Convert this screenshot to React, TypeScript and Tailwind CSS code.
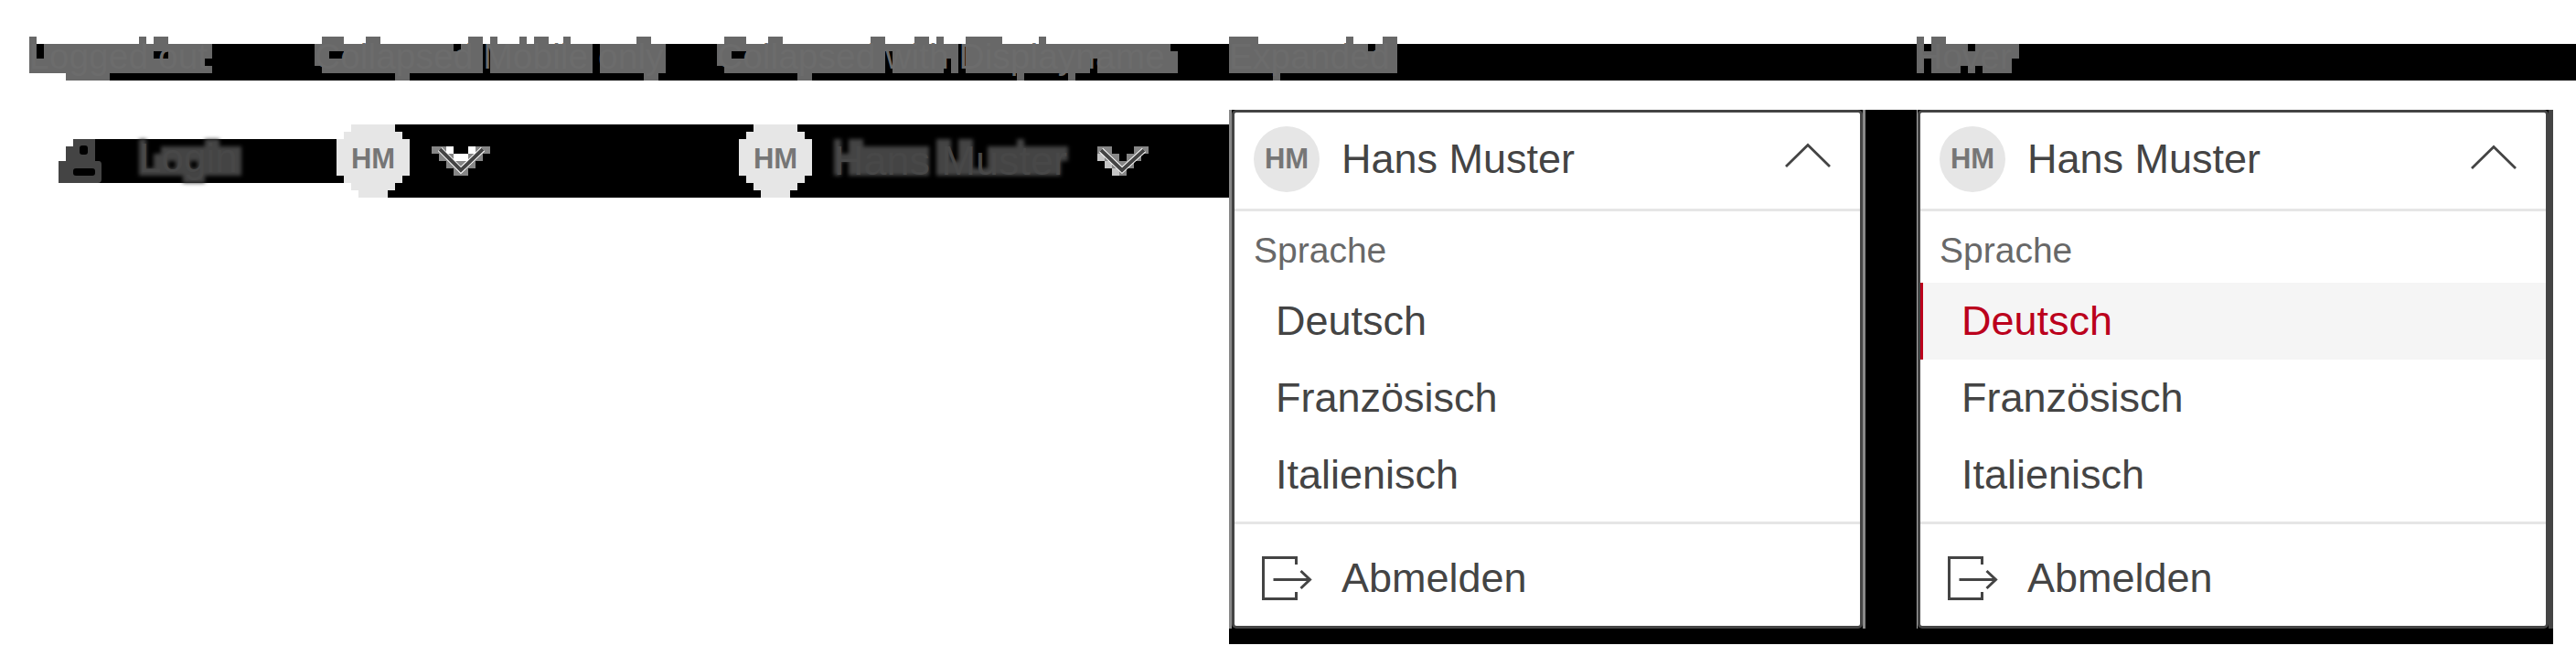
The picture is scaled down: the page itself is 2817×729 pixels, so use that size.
import React from "react";

type Span = [start: number, length: number];

const CELL = 8;

/** Draws rows of filled 8px cells; every row is a list of [start, length] runs. */
function Cells({
  rows,
  columns,
  fill,
  className,
}: {
  rows: Span[][];
  columns: number;
  fill: string;
  className: string;
}) {
  return (
    <svg
      aria-hidden="true"
      className={className}
      width={columns * CELL}
      height={rows.length * CELL}
      shapeRendering="crispEdges"
    >
      {rows.map((row, y) =>
        row.map(([start, length]) => (
          <rect
            key={`${y}-${start}`}
            x={start * CELL}
            y={y * CELL}
            width={length * CELL}
            height={CELL}
            fill={fill}
          />
        )),
      )}
    </svg>
  );
}

const labels: { text: string; columns: number; rows: Span[][] }[] = [
  {
    text: "Logged out",
    columns: 25,
    rows: [
      [[0, 1], [15, 1], [17, 2]],
      [[0, 1], [2, 23]],
      [[0, 1], [2, 15], [19, 6]],
      [[0, 24]],
      [[0, 25]],
      [[5, 6]],
    ],
  },
  {
    text: "Collapsed Mobile only",
    columns: 48,
    rows: [
      [[1, 3], [7, 2], [21, 2], [24, 1], [28, 1], [30, 2], [34, 1], [44, 2]],
      [[0, 19], [20, 3], [24, 14], [39, 9]],
      [[0, 2], [4, 19], [24, 14], [39, 9]],
      [[0, 23], [24, 14], [39, 9]],
      [[1, 22], [24, 14], [39, 9]],
      [[11, 2], [45, 2]],
    ],
  },
  {
    text: "Collapsed with Displayname",
    columns: 63,
    rows: [
      [[1, 3], [7, 2], [21, 2], [27, 2], [30, 1], [34, 5], [44, 1]],
      [[0, 33], [34, 28]],
      [[0, 2], [4, 19], [24, 9], [34, 29]],
      [[0, 23], [24, 7], [32, 1], [34, 17], [52, 11]],
      [[1, 22], [24, 7], [32, 1], [34, 17], [52, 11]],
      [[11, 2], [41, 1], [48, 1]],
    ],
  },
  {
    text: "Expanded",
    columns: 23,
    rows: [
      [[0, 4], [16, 1], [21, 2]],
      [[0, 19], [20, 3]],
      [[0, 23]],
      [[0, 23]],
      [[0, 23]],
      [[6, 1]],
    ],
  },
  {
    text: "Hover",
    columns: 14,
    rows: [
      [[0, 1], [2, 2]],
      [[0, 1], [2, 5], [8, 6]],
      [[0, 14]],
      [[0, 1], [2, 11]],
      [[0, 1], [2, 4], [7, 1], [9, 4]],
      [],
    ],
  },
];

const loginCells: Span[][] = [
  [[0, 1], [9, 2]],
  [[0, 1], [3, 11]],
  [[0, 1], [2, 12]],
  [[0, 1], [2, 2], [5, 2], [8, 6]],
  [[0, 14]],
  [[6, 3]],
];

const nameCells: Span[][] = [
  [[0, 1], [2, 2], [14, 2], [17, 2], [25, 1]],
  [[0, 1], [2, 11], [14, 2], [17, 2], [21, 11]],
  [[0, 13], [14, 2], [17, 2], [21, 11]],
  [[0, 1], [2, 11], [14, 5], [21, 10]],
  [[0, 1], [2, 11], [14, 17]],
];

const avatarCells: Span[][] = [
  [[2, 6]],
  [[1, 8]],
  [[0, 10]],
  [[0, 10]],
  [[0, 10]],
  [[0, 10]],
  [[0, 10]],
  [[1, 8]],
  [[2, 6]],
  [[3, 4]],
];

function Label({ text, columns, rows }: (typeof labels)[number]) {
  return (
    <h2 className="relative text-[39px] leading-7 font-normal whitespace-nowrap text-[#6c6c6c]">
      <Cells rows={rows} columns={columns} fill="#686868" className="absolute -top-2 left-0" />
      <span className="relative">{text}</span>
    </h2>
  );
}

function BlockAvatar({ open }: { open?: boolean }) {
  return (
    <span className="relative flex size-20 items-center justify-center text-[31px] leading-8 font-bold text-[#767676]">
      {open && (
        <svg aria-hidden="true" className="absolute inset-0" width="80" height="80" shapeRendering="crispEdges">
          <path d="M0 0H40V80H0Z" fill="#fff" />
          <path d="M0 56H8V64H0Z" fill="#000" />
        </svg>
      )}
      <Cells rows={avatarCells} columns={10} fill="#e6e6e6" className="absolute inset-0" />
      <span className="relative pb-1">HM</span>
    </span>
  );
}

function UserIcon() {
  return (
    <svg aria-hidden="true" className="shrink-0" width="48" height="48" viewBox="0 0 48 48">
      <path d="M0 0H16V8H8V24H0Z" fill="#fff" />
      <path d="M16 0H40V24H44Q47 24 47 28V44Q47 48 43 48H0V24H8V8H16Z" fill="#444" />
      <rect x="23" y="7" width="9" height="10" rx="3" fill="#000" />
      <rect x="16" y="32" width="24" height="8" rx="3" fill="#000" />
    </svg>
  );
}

function ChevronWide() {
  return (
    <svg aria-hidden="true" width="64" height="32" viewBox="0 0 64 32">
      <g shapeRendering="crispEdges">
        <path d="M0 0H16V8H24V16H40V8H48V0H64V8H56V16H48V24H40V32H24V24H16V16H8V8H0Z" fill="#868686" />
        <path d="M16 0H24V8H40V0H48V8H40V16H24V8H16Z" fill="#fff" />
      </g>
      <path d="M9 3L32 26L56 3" fill="none" stroke="#fff" strokeWidth="6" />
      <path d="M9 3L32 26L56 3" fill="none" stroke="#444" strokeWidth="4" />
    </svg>
  );
}

function ChevronNarrow() {
  return (
    <svg aria-hidden="true" width="56" height="32" viewBox="0 0 56 32">
      <g shapeRendering="crispEdges">
        <path d="M0 0H16V8H24V16H32V8H40V0H56V8H48V16H40V24H32V32H24V24H16V16H8V8H0Z" fill="#868686" />
        <path d="M0 8H8V16H16V24H24V32H16V24H8V16H0Z" fill="#c4c4c4" />
      </g>
      <path d="M4 4L27 26L51 4" fill="none" stroke="#fff" strokeWidth="6" />
      <path d="M4 4L27 26L51 4" fill="none" stroke="#444" strokeWidth="4" />
    </svg>
  );
}

function ChevronUp() {
  return (
    <svg aria-hidden="true" width="50" height="28" viewBox="0 0 50 28">
      <path d="M1 26L25 2.5L49 26" fill="none" stroke="#444" strokeWidth="2.8" />
    </svg>
  );
}

function ExitIcon() {
  return (
    <svg aria-hidden="true" width="56" height="48" viewBox="0 0 56 48" fill="none" stroke="#444" strokeWidth="3">
      <path d="M37.5 9V1.5H1.5V46.5H37.5V39" />
      <path d="M12.5 25.5H52" />
      <path d="M42.5 16L52.5 25.5L42.5 35" />
    </svg>
  );
}

const languages = ["Deutsch", "Französisch", "Italienisch"];

function Menu({ active, frame, chevron }: { active?: string; frame: string; chevron: string }) {
  return (
    <div className={frame}>
      <div className="rounded-[5px] border-[3px] border-[#444] bg-white text-[45px] leading-[50px] text-[#444]">
        <button
          type="button"
          aria-expanded="true"
          className="flex h-[108px] w-full items-center border-b-[3px] border-[#e6e6e6] pr-8 pb-1 pl-[21px]"
        >
          <span className="flex size-[72px] items-center justify-center rounded-full bg-[#e6e6e6] text-[31px] font-bold text-[#767676]">
            HM
          </span>
          <span className="ml-6">Hans Muster</span>
          <span className={chevron}>
            <ChevronUp />
          </span>
        </button>
        <div className="border-b-[3px] border-[#e6e6e6] pb-[9px]">
          <h3 className="flex h-[78px] items-center pt-[7px] pl-[21px] text-[39px] font-normal text-[#686868]">
            Sprache
          </h3>
          <ul>
            {languages.map((language) => (
              <li key={language}>
                <button
                  type="button"
                  className={
                    language === active
                      ? "flex h-[84px] w-full items-center border-l-[3px] border-[#bb001c] bg-[#f5f5f5] pl-[42px] text-[#bb001c]"
                      : "flex h-[84px] w-full items-center pl-[45px]"
                  }
                >
                  {language}
                </button>
              </li>
            ))}
          </ul>
        </div>
        <button type="button" className="flex h-[111px] w-full items-center pt-[7px] pl-[30px]">
          <ExitIcon />
          <span className="ml-[31px]">Abmelden</span>
        </button>
      </div>
    </div>
  );
}

export default function App() {
  return (
    <main className="min-h-screen overflow-hidden bg-white pt-12 font-['Liberation_Sans',Arial,sans-serif]">
      <header className="flex">
        <div className="relative grid h-10 flex-1 grid-cols-[312fr_440fr_560fr_752fr_721fr] items-start bg-black pl-8">
          <svg aria-hidden="true" className="absolute inset-y-0 left-0" width="72" height="40" shapeRendering="crispEdges">
            <path d="M0 0H32V32H72V40H0Z" fill="#fff" />
          </svg>
          {labels.map((label) => (
            <Label key={label.text} {...label} />
          ))}
        </div>
      </header>

      <section className="grid grid-cols-[368fr_976fr_1448fr] items-start pt-8 pr-[25px]">
        <button type="button" className="mt-8 ml-16 flex h-12 items-start bg-black text-[44px] leading-[42px] text-[#484848]">
          <UserIcon />
          <span className="relative ml-10">
            <Cells rows={loginCells} columns={14} fill="#444" className="absolute top-0 left-0 blur-[2px]" />
            <span className="relative">Login</span>
          </span>
        </button>

        <div className="mt-4 flex h-20 items-center justify-between bg-black pr-[88px]">
          <button type="button" aria-label="HM" className="flex items-center gap-6">
            <BlockAvatar open />
            <ChevronWide />
          </button>
          <button type="button" className="flex items-center text-[45px] leading-[50px] text-[#484848]">
            <BlockAvatar />
            <span className="relative ml-6 w-64 text-left whitespace-nowrap">
              <Cells rows={nameCells} columns={32} fill="#444" className="absolute top-px left-0 blur-[2px]" />
              <span className="relative">Hans Muster</span>
            </span>
            <span className="ml-8">
              <ChevronNarrow />
            </span>
          </button>
        </div>

        <div className="grid grid-cols-2 gap-14 bg-black pb-[17px]">
          <Menu frame="border-x-[3px] border-[#888]" chevron="ml-auto pb-2" />
          <Menu
            active="Deutsch"
            frame="border-r-[5px] border-l border-r-[#444] border-l-[#aaa]"
            chevron="ml-auto pb-1"
          />
        </div>
      </section>
    </main>
  );
}
